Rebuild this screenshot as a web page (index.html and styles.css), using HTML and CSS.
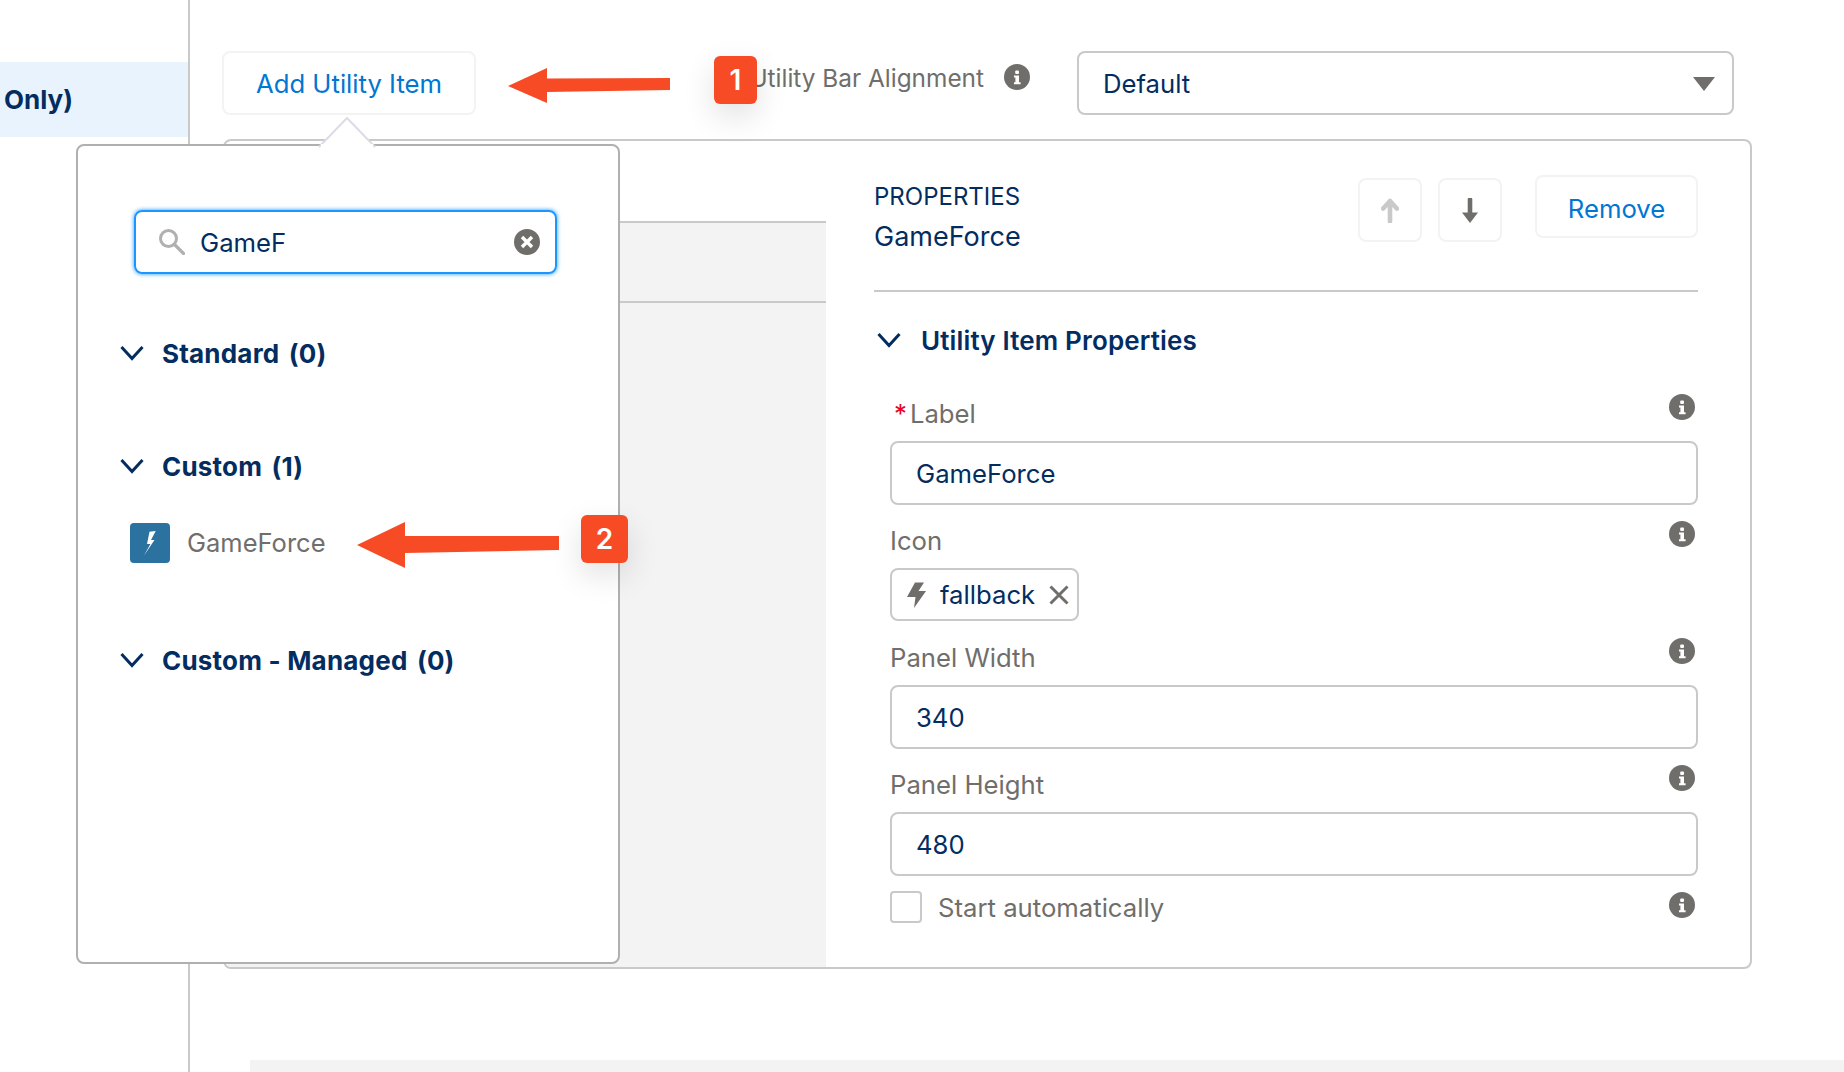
FILE: index.html
```html
<!DOCTYPE html>
<html lang="en">
<head>
    <meta charset="UTF-8">
    <title>Utility Bar</title>
    <link rel="stylesheet" href="styles.css">
</head>
<body>
    <svg width="0" height="0" class="defs">
        <symbol id="info" viewBox="0 0 26 26">
            <circle cx="13" cy="13" r="13" fill="#706e6b"/>
            <rect x="11.200" y="6.500" width="3.800" height="3.600" rx="1" fill="#fff"/>
            <path d="M10 11.500h5v6.800h1.600v2H10v-2h1.400v-4.800H10z" fill="#fff"/>
        </symbol>
        <symbol id="chevron" viewBox="0 0 24 16">
            <path d="M1.500 2L12 13.500 22.500 2" fill="none" stroke="#032d60" stroke-width="3"/>
        </symbol>
    </svg>

    <aside class="sidebar">
        <div class="side-item">Only)</div>
    </aside>

    <main class="main">
        <div class="toolbar">
            <button class="btn add-btn">Add Utility Item</button>
            <div class="align-label">Utility Bar Alignment</div>
            <svg class="info align-info"><use href="#info"/></svg>
            <div class="select">
                <span>Default</span>
                <span class="caret"></span>
            </div>
        </div>

        <div class="builder">
            <div class="list-col">
                <div class="list-head"></div>
                <div class="list-row"></div>
                <div class="list-rest"></div>
            </div>
            <div class="props-col">
                <div class="props-head">
                    <div>
                        <div class="props-eyebrow">PROPERTIES</div>
                        <div class="props-name">GameForce</div>
                    </div>
                    <div class="props-actions">
                        <button class="btn icon-btn">
                            <svg width="18" height="25" viewBox="0 0 18 25"><path d="M9 23.500V3M2.200 10.500L9 3l6.800 7.500" fill="none" stroke="#c9c9c9" stroke-width="4.600" stroke-linecap="round" stroke-linejoin="round"/></svg>
                        </button>
                        <button class="btn icon-btn">
                            <svg width="18" height="25" viewBox="0 0 18 25"><path d="M9 1.500V20" fill="none" stroke="#706e6b" stroke-width="4.600" stroke-linecap="round"/><path d="M1 14.500h16L9 25z" fill="#706e6b"/></svg>
                        </button>
                        <button class="btn remove-btn">Remove</button>
                    </div>
                </div>

                <div class="props-title">
                    <svg class="chevron"><use href="#chevron"/></svg>
                    Utility Item Properties
                </div>

                <div class="field">
                    <div class="field-label"><span><abbr>*</abbr>Label</span><svg class="info"><use href="#info"/></svg></div>
                    <div class="input">GameForce</div>
                </div>
                <div class="field">
                    <div class="field-label"><span>Icon</span><svg class="info"><use href="#info"/></svg></div>
                    <div class="pill">
                        <svg width="19" height="26" viewBox="0 0 19 26"><path d="M8 .5h9L11.500 9H19L7 26l1.500-11H0z" fill="#706e6b"/></svg>
                        <span>fallback</span>
                        <svg width="20" height="20" viewBox="0 0 20 20"><path d="M1.500 1.500l17 17M18.500 1.500l-17 17" stroke="#706e6b" stroke-width="3" fill="none"/></svg>
                    </div>
                </div>
                <div class="field">
                    <div class="field-label"><span>Panel Width</span><svg class="info"><use href="#info"/></svg></div>
                    <div class="input">340</div>
                </div>
                <div class="field">
                    <div class="field-label"><span>Panel Height</span><svg class="info"><use href="#info"/></svg></div>
                    <div class="input">480</div>
                </div>
                <div class="check-row">
                    <span class="checkbox"></span>
                    <span class="check-text">Start automatically</span>
                    <svg class="info check-info"><use href="#info"/></svg>
                </div>
            </div>
        </div>

        <div class="bottom-strip"></div>
    </main>

    <!-- popover sits over the builder -->
    <div class="popover">
        <svg class="notch" width="58" height="33" viewBox="0 0 58 33"><path d="M1 30L29 1l28 29" fill="#fff" stroke="#dddbe6" stroke-width="2"/><rect x="3" y="27" width="52" height="5" fill="#fff"/></svg>
        <div class="search">
            <svg width="26" height="26" viewBox="0 0 26 26"><circle cx="9.500" cy="9.500" r="8" fill="none" stroke="#b0b0b0" stroke-width="3"/><path d="M15.500 15.500l9 9" stroke="#b0b0b0" stroke-width="3.200" stroke-linecap="round"/></svg>
            <span class="search-text">GameF</span>
            <svg width="26" height="26" viewBox="0 0 26 26"><circle cx="13" cy="13" r="13" fill="#706e6b"/><path d="M8 8l10 10M18 8L8 18" stroke="#fff" stroke-width="3.400"/></svg>
        </div>
        <div class="tree-section">
            <div class="tree-head"><svg class="chevron"><use href="#chevron"/></svg>Standard <span class="count">(0)</span></div>
        </div>
        <div class="tree-section">
            <div class="tree-head"><svg class="chevron"><use href="#chevron"/></svg>Custom <span class="count">(1)</span></div>
            <div class="tree-item">
                <span class="item-icon">
                    <svg width="12" height="25" viewBox="0 0 12 25"><path d="M11.700 0L5.500.7 3 13h3.400L0 24.500 10.500 9H7z" fill="#fff"/></svg>
                </span>
                GameForce
            </div>
        </div>
        <div class="tree-section">
            <div class="tree-head"><svg class="chevron"><use href="#chevron"/></svg>Custom - Managed <span class="count">(0)</span></div>
        </div>
    </div>

    <!-- annotations -->
    <svg class="arrow arrow-one" width="164" height="37" viewBox="0 0 164 37"><path d="M1 18L40 0v10.500L163 10v12L40 24v11z" fill="#f74b25"/></svg>
    <svg class="arrow arrow-two" width="204" height="47" viewBox="0 0 204 47"><path d="M1 23L49 0v14h154v14L49 31v15z" fill="#f74b25"/></svg>
    <div class="marker marker-one">1</div>
    <div class="marker marker-two">2</div>
</body>
</html>
```
FILE: styles.css
```css
* {
    box-sizing: border-box;
}
html, body {
    height: 1072px;
    overflow: hidden;
}
body {
    margin: 0;
    display: flex;
    position: relative;
    background: #fff;
    font-family: Inter, "Liberation Sans", sans-serif;
    font-size: 25.7px;
    color: #032d60;
}
.defs {
    position: absolute;
}
button {
    font: inherit;
}

/* sidebar */
.sidebar {
    width: 190px;
    flex: none;
    padding-top: 62px;
    border-right: 2px solid #c9c9c9;
}
.side-item {
    height: 75px;
    padding: 19px 0 0 4px;
    background: #e8f3fd;
    font-size: 26px;
    font-weight: 700;
    line-height: 38px;
}

/* main area */
.main {
    flex: 1;
    min-width: 0;
    padding: 51px 0 0 32px;
}
.toolbar {
    display: flex;
    align-items: center;
    height: 64px;
    width: 1512px;
}
.btn {
    background: #fff;
    border: 2px solid #f3f3f3;
    border-radius: 8px;
    color: #0176d3;
    padding: 0;
}
.add-btn {
    width: 254px;
    height: 64px;
}
.align-label {
    margin: -10px 0 0 267px;
    width: 241px;
    white-space: nowrap;
    font-size: 24.4px;
    text-align: right;
    color: #706e6b;
}
.info {
    width: 26px;
    height: 26px;
    flex: none;
}
.align-info {
    margin: -12px 0 0 20px;
}
.select {
    flex: 1;
    height: 64px;
    margin-left: 47px;
    display: flex;
    align-items: center;
    justify-content: space-between;
    padding: 0 17px 0 24px;
    border: 2px solid #c9c9c9;
    border-radius: 8px;
}
.caret {
    width: 0;
    height: 0;
    margin-top: 2px;
    border-left: 11px solid transparent;
    border-right: 11px solid transparent;
    border-top: 14px solid #706e6b;
}

/* builder panel */
.builder {
    width: 1529px;
    height: 830px;
    margin: 24px 0 0 1px;
    display: flex;
    border: 2px solid #c9c9c9;
    border-radius: 8px;
    overflow: hidden;
}
.list-col {
    width: 601px;
    flex: none;
    display: flex;
    flex-direction: column;
}
.list-head {
    height: 82px;
    border-bottom: 2px solid #c9c9c9;
}
.list-row {
    height: 80px;
    background: #f3f3f3;
    border-bottom: 2px solid #c9c9c9;
}
.list-rest {
    flex: 1;
    background: #f3f3f3;
}
.props-col {
    flex: 1;
    padding: 34px 52px 0 48px;
}
.props-head {
    display: flex;
    justify-content: space-between;
    height: 117px;
    border-bottom: 2px solid #c9c9c9;
}
.props-eyebrow {
    font-size: 24px;
    line-height: 30px;
    margin-top: 7px;
}
.props-name {
    font-size: 27px;
    line-height: 34px;
    margin-top: 8px;
}
.props-actions {
    display: flex;
    align-items: flex-start;
}
.icon-btn {
    width: 64px;
    height: 64px;
    margin: 3px 16px 0 0;
    display: flex;
    align-items: center;
    justify-content: center;
}
.remove-btn {
    width: 163px;
    height: 63px;
    margin-left: 17px;
    padding-top: 3px;
}
.props-title {
    display: flex;
    align-items: center;
    height: 40px;
    margin: 28px 0 34px 3px;
    font-size: 26px;
    font-weight: 600;
    letter-spacing: 0.15px;
}
.chevron {
    width: 24px;
    height: 16px;
    flex: none;
    margin-right: 20px;
}
.field {
    margin: 0 0 16px 16px;
}
.field-label {
    display: flex;
    justify-content: space-between;
    height: 47px;
    padding-right: 3px;
    color: #706e6b;
}
.field-label span {
    margin-top: 5px;
    line-height: 30px;
}
.field-label abbr {
    color: #ea001e;
    margin: 0 3px 0 4px;
}
.input {
    height: 64px;
    padding-left: 24px;
    display: flex;
    align-items: center;
    border: 2px solid #c9c9c9;
    border-radius: 8px;
}
.pill {
    width: 189px;
    height: 53px;
    margin-bottom: 17px;
    display: flex;
    align-items: center;
    gap: 14px;
    padding-left: 15px;
    border: 2px solid #c9c9c9;
    border-radius: 8px;
}
.check-row {
    display: flex;
    align-items: center;
    margin: -1px 0 0 16px;
    padding-right: 3px;
}
.checkbox {
    width: 32px;
    height: 32px;
    flex: none;
    border: 2px solid #c9c9c9;
    border-radius: 4px;
}
.check-text {
    flex: 1;
    padding-left: 16px;
    color: #706e6b;
}
.check-info {
    margin-top: -4px;
}
.bottom-strip {
    height: 30px;
    margin: 91px 0 0 28px;
    background: #f3f3f3;
}

/* popover */
.popover {
    position: absolute;
    left: 76px;
    top: 144px;
    width: 544px;
    height: 820px;
    padding-top: 64px;
    background: #fff;
    border: 2px solid #b0b0b0;
    border-radius: 8px;
}
.notch {
    position: absolute;
    left: 240px;
    top: -29px;
}
.search {
    width: 423px;
    height: 64px;
    margin: 0 0 59px 56px;
    display: flex;
    align-items: center;
    padding: 0 15px 0 23px;
    border: 2px solid #1b96ff;
    border-radius: 8px;
    box-shadow: 0 0 4px #1b96ff;
}
.search-text {
    flex: 1;
    padding-left: 15px;
}
.tree-section {
    padding: 0 0 73px 42px;
}
.tree-head {
    display: flex;
    align-items: center;
    height: 40px;
    font-size: 26px;
    font-weight: 700;
    letter-spacing: 0.2px;
    white-space: pre;
}
.tree-head .chevron {
    margin-right: 18px;
}
.count {
    margin-left: 3px;
}
.tree-item {
    display: flex;
    align-items: center;
    gap: 17px;
    margin: 37px 0 4px 10px;
    font-size: 25.5px;
    line-height: 38px;
    color: #706e6b;
}
.item-icon {
    width: 40px;
    height: 40px;
    display: flex;
    align-items: center;
    justify-content: center;
    background: #2b72a1;
    border-radius: 4px;
}

/* annotations */
.arrow {
    position: absolute;
}
.arrow-one {
    left: 507px;
    top: 68px;
}
.arrow-two {
    left: 356px;
    top: 522px;
}
.marker {
    position: absolute;
    display: flex;
    align-items: center;
    justify-content: center;
    height: 48px;
    background: #f74b25;
    border-radius: 6px;
    box-shadow: 0 12px 32px rgba(0, 0, 0, 0.12);
    color: #fff;
    font-size: 28px;
    font-weight: 600;
}
.marker-one {
    left: 714px;
    top: 56px;
    width: 43px;
}
.marker-two {
    left: 581px;
    top: 515px;
    width: 47px;
}
```
